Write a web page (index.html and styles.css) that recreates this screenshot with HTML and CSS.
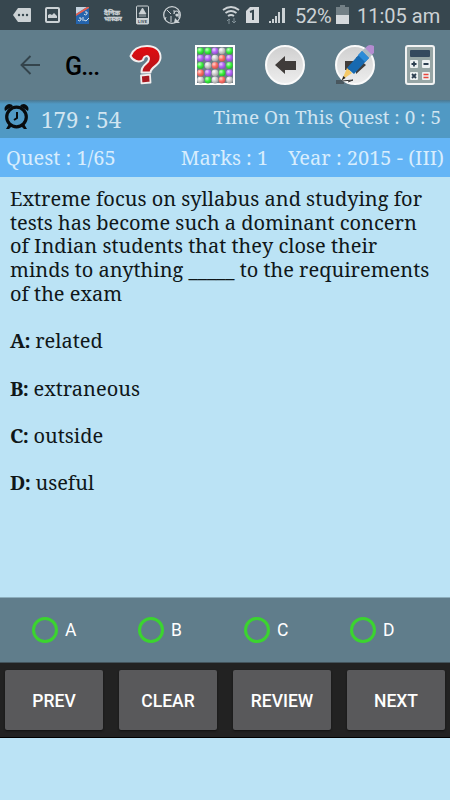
FILE: index.html
```
<!DOCTYPE html>
<html lang="en">
<head>
    <meta charset="UTF-8">
    <meta name="viewport" content="width=device-width, initial-scale=1.0">
    <title>GATE Quiz</title>
    <link rel="stylesheet" href="styles.css">
</head>
<body>
    <div class="status-bar">
        <svg class="status-left" width="190" height="30" viewBox="0 0 190 30">
            <path d="M13 15l5-7h12q1 0 1 1v12q0 1-1 1H18z" fill="#ccd2d5"/>
            <g fill="#37474f"><circle cx="19" cy="15" r="1.2"/><circle cx="23" cy="15" r="1.2"/><circle cx="27" cy="15" r="1.2"/></g>
            <rect x="46" y="8" width="13" height="14" rx="1" fill="none" stroke="#ccd2d5" stroke-width="2"/>
            <path d="M48 18v-3l2-1 2 1 2-2 3 3v2z" fill="#ccd2d5"/>
            <rect x="76" y="7" width="13" height="17" fill="#2464ad"/>
            <path d="M76 7h11L76 14z" fill="#c5d3df"/>
            <path d="M76 14L87 7h2v1L76 16z" fill="#e85d4b"/>
            <path d="M85 12q3-1 2 2-2 2-3 0M79 18q3-1 2 2-2 2-3 0M83 17v4M84 20l2 1 3-3" stroke="#d4dfe8" fill="none"/>
            <text class="hindi" x="104" y="14.500" textLength="16" lengthAdjust="spacingAndGlyphs">दैनिक</text>
            <text class="hindi" x="104" y="21" textLength="18" lengthAdjust="spacingAndGlyphs">भास्कर</text>
            <rect x="136.500" y="6" width="12" height="18" rx="1" fill="#37474f" stroke="#ccd2d5"/>
            <path d="M142.500 8l3.500 6h-7zM139 16h7" fill="#ccd2d5" stroke="#ccd2d5" stroke-width=".8"/>
            <rect x="136.500" y="18" width="12" height="6" fill="#ccd2d5"/>
            <text class="live" x="138" y="23" textLength="9">LIVE</text>
            <g fill="none" stroke="#ccd2d5">
                <circle cx="172" cy="15" r="8.300" stroke-width="1.300"/>
                <path d="M167 10l4 4M171 16v6M166 17l-1 3M173 11h2"/>
                <path d="M174 14c0-4 5-4 5 0v4" stroke-width="1.200"/>
            </g>
            <path d="M175 15q2-3 4 0l-2 2zM175 18l5 5h-6z" fill="#ccd2d5"/>
        </svg>
        <svg class="status-right" width="72" height="30" viewBox="220 0 72 30">
            <g fill="none" stroke="#ccd2d5" stroke-width="1.900">
                <path d="M223 10q8-6 16 0M225.500 13q5.500-4 11 0M228 16q3-2 6 0"/>
            </g>
            <path d="M229 24v-5m-2 2l2-2 1 1M234 18v5m-2-2l2 2 2-2" stroke="#819097" fill="none"/>
            <path d="M250 7h9v16h-13V11z" fill="#d5d9dc"/>
            <path d="M250 12l3-1v9" stroke="#37474f" stroke-width="2" fill="none"/>
            <path d="M269 23v-2h2v2zM272 23v-4h2v4zM275 23v-7h2v7zM278 23V12h2v11zM282 23V8h3v15z" fill="#ccd2d5"/>
        </svg>
        <span class="battery-text">52%</span>
        <svg class="battery" width="13" height="20" viewBox="0 0 13 20">
            <path d="M4 0h5v2h4v8H0V2h4z" fill="#738086"/>
            <path d="M0 10h13v9H0z" fill="#d5d9dc"/>
        </svg>
        <span class="clock">11:05 am</span>
    </div>

    <div class="toolbar">
        <svg class="back" width="20" height="20" viewBox="0 0 20 20">
            <path d="M20 10H2M10.500 1L1.500 10l9 9" fill="none" stroke="#34444c" stroke-width="1.900"/>
        </svg>
        <div class="title">G...</div>
        <div class="tools">
            <svg width="40" height="42" viewBox="0 0 40 42">
                <defs>
                    <linearGradient id="red" x1="0" y1="0" x2="0" y2="1"><stop stop-color="#e20b0e"/><stop offset="1" stop-color="#b5151c"/></linearGradient>
                    <linearGradient id="silver" x1="0" y1="0" x2="0" y2="1"><stop stop-color="#cfcfcf"/><stop offset="1" stop-color="#eee"/></linearGradient>
                    <radialGradient id="g" cx=".35" cy=".3" r=".8"><stop stop-color="#c4ffc0"/><stop offset=".5" stop-color="#38ee3c"/><stop offset="1" stop-color="#22a928"/></radialGradient>
                    <radialGradient id="p" cx=".35" cy=".3" r=".8"><stop stop-color="#ead5ff"/><stop offset=".5" stop-color="#b463f5"/><stop offset="1" stop-color="#8150b5"/></radialGradient>
                    <radialGradient id="w" cx=".35" cy=".3" r=".8"><stop stop-color="#fff"/><stop offset=".5" stop-color="#cbcbcb"/><stop offset="1" stop-color="#929292"/></radialGradient>
                    <radialGradient id="r" cx=".35" cy=".3" r=".8"><stop stop-color="#ffd5d0"/><stop offset=".5" stop-color="#fa6d65"/><stop offset="1" stop-color="#c34f49"/></radialGradient>
                </defs>
                <path d="M5.500 12C8 5 14 2 22 2c9 0 14 5 13.500 12C35 22 26 22 25.500 28.500h-9C16 20 24 20 24 15c0-4-5-4-6 1-4 3-10 1-12.500-4z" fill="url(#red)" stroke="#f2eeee" stroke-width="2" stroke-linejoin="round"/>
                <path d="M16 31.500l9-.8.500 7.800-9 .8z" fill="#a81820" stroke="#f2eeee" stroke-width="1.800" stroke-linejoin="round"/>
            </svg>
            <svg width="40" height="40" viewBox="0 0 40 40">
                <rect x="1" y="1" width="38" height="38" fill="#6c7d87" stroke="#fff" stroke-width="2"/>
                <g fill="url(#g)"><circle cx="5.500" cy="6" r="3.400"/><circle cx="13" cy="6" r="3.400"/><circle cx="34.500" cy="6" r="3.400"/><circle cx="5.500" cy="20.500" r="3.400"/><circle cx="34.500" cy="20.500" r="3.400"/><circle cx="27" cy="28" r="3.400"/><circle cx="13" cy="35" r="3.400"/></g>
                <g fill="url(#p)"><circle cx="20" cy="6" r="3.400"/><circle cx="5.500" cy="13.200" r="3.400"/><circle cx="13" cy="13.200" r="3.400"/><circle cx="34.500" cy="13.200" r="3.400"/><circle cx="27" cy="20.500" r="3.400"/><circle cx="13" cy="28" r="3.400"/><circle cx="34.500" cy="28" r="3.400"/></g>
                <g fill="url(#w)"><circle cx="27" cy="6" r="3.400"/><circle cx="20" cy="13.200" r="3.400"/><circle cx="13" cy="20.500" r="3.400"/><circle cx="20" cy="28" r="3.400"/><circle cx="5.500" cy="35" r="3.400"/><circle cx="20" cy="35" r="3.400"/><circle cx="34.500" cy="35" r="3.400"/></g>
                <g fill="url(#r)"><circle cx="27" cy="13.200" r="3.400"/><circle cx="20" cy="20.500" r="3.400"/><circle cx="5.500" cy="28" r="3.400"/><circle cx="27" cy="35" r="3.400"/></g>
            </svg>
            <svg width="40" height="40" viewBox="0 0 40 40">
                <circle cx="20" cy="20" r="19" fill="url(#silver)" stroke="#fafafa" stroke-width="2"/>
                <path d="M10 20l10-9v5h11v9H20v4z" fill="#403c3a"/>
            </svg>
            <svg width="40" height="40" viewBox="0 0 40 40">
                <circle cx="20" cy="20" r="19" fill="url(#silver)" stroke="#fafafa" stroke-width="2"/>
                <path d="M10 16h11v-4l10 8-10 9v-4H10z" fill="#403c3a"/>
                <path d="M30 4q3-6 9-3v7l-4 3z" fill="#b48cd0"/>
                <path d="M30 3l7 7-3 3-7-7z" fill="#aebac2"/>
                <path d="M27 6l7 7-15 16-7-6z" fill="#1769b0"/>
                <path d="M27 6l7 7-4 4-7-7z" fill="#2c8bd8"/>
                <path d="M12 23l5 5-10 7z" fill="#f5c968"/>
                <path d="M8.500 31l2 2-4 2.500z" fill="#222"/>
                <path d="M1 36h6l11-1-5 2M1 38h8" stroke="#333" fill="none"/>
            </svg>
            <svg width="30" height="40" viewBox="0 0 30 40">
                <rect x="1" y="1" width="28" height="38" rx="2" fill="#96a5a5" stroke="#f2f3f3" stroke-width="2"/>
                <rect x="5" y="5" width="20" height="7" rx="1" fill="#34495e"/>
                <g fill="#ecf0f1"><rect x="5" y="15" width="8" height="8" rx="1"/><rect x="17" y="15" width="8" height="8" rx="1"/><rect x="5" y="27" width="8" height="8" rx="1"/><rect x="17" y="27" width="8" height="8" rx="1"/></g>
                <path d="M9 16.500v5M6.500 19h5M18.500 19h5M7 29l4 4m0-4l-4 4" stroke="#2c3e50" stroke-width="1.800"/>
                <path d="M18.500 29.500h5M18.500 32.500h5" stroke="#e9453c" stroke-width="1.700"/>
            </svg>
        </div>
    </div>

    <div class="timer-bar">
        <svg class="alarm" width="25" height="26" viewBox="0 0 25 26">
            <path d="M1 7Q-1 2 5 0q3 0 4 2zM24 7q2-5-4-7-3 0-4 2z" fill="#080b0d"/>
            <circle cx="12.500" cy="13" r="9.800" fill="none" stroke="#080b0d" stroke-width="3.200"/>
            <path d="M13 8v6l-3 2" fill="none" stroke="#080b0d" stroke-width="2"/>
            <path d="M5 20l-3 5h3l3-3M20 20l3 5h-3l-3-3" fill="#080b0d"/>
        </svg>
        <span class="timer">179 : 54</span>
        <span class="quest-time">Time On This Quest : 0 : 5</span>
    </div>

    <div class="info-bar">
        <span class="quest">Quest : 1/65</span>
        <span class="marks">Marks : 1</span>
        <span class="year">Year : 2015 - (III)</span>
    </div>

    <div class="question">
        <p>Extreme focus on syllabus and studying for<br>
        tests has become such a dominant concern<br>
        of Indian students that they close their<br>
        minds to anything _____ to the requirements<br>
        of the exam</p>
        <p><b>A:</b> related</p>
        <p><b>B:</b> extraneous</p>
        <p><b>C:</b> outside</p>
        <p><b>D:</b> useful</p>
    </div>

    <div class="answers">
        <label><span class="radio"></span>A</label>
        <label><span class="radio"></span>B</label>
        <label><span class="radio"></span>C</label>
        <label><span class="radio"></span>D</label>
    </div>

    <div class="buttons">
        <button>PREV</button>
        <button>CLEAR</button>
        <button>REVIEW</button>
        <button>NEXT</button>
    </div>
</body>
</html>
```
FILE: styles.css
```
* {
    box-sizing: border-box;
}

body {
    margin: 0;
    height: 800px;
    overflow: hidden;
    display: flex;
    flex-direction: column;
    background: #bbe3f5;
    font-family: Roboto, sans-serif;
}

svg {
    display: block;
    flex-shrink: 0;
}

.status-bar {
    height: 30px;
    display: flex;
    align-items: center;
    background: #37474f;
    color: #ccd2d5;
    font-size: 20px;
    white-space: nowrap;
}

.status-right {
    margin-left: 30px;
}

.battery-text {
    width: 37px;
    margin-left: 3px;
    padding-top: 2px;
    letter-spacing: -0.2px;
}

.battery {
    margin-left: 4px;
}

.clock {
    margin-left: 8px;
    padding-top: 2px;
}

.hindi {
    font: bold 6px "Noto Sans", sans-serif;
    fill: #ccd2d5;
    stroke: #ccd2d5;
    stroke-width: 0.3px;
}

.live {
    font: bold 4px Roboto, sans-serif;
    fill: #37474f;
}

.toolbar {
    height: 70px;
    display: flex;
    align-items: center;
    padding: 0 15px 0 20px;
    background: #607d8b;
}

.title {
    width: 60px;
    padding: 3px 0 0 25px;
    font-size: 25px;
    font-weight: 500;
    letter-spacing: -0.9px;
    white-space: nowrap;
}

.tools {
    flex: 1;
    display: flex;
    align-items: center;
    justify-content: space-between;
    margin-left: 25px;
}

.timer-bar,
.info-bar,
.question {
    font-family: "Noto Serif", "DejaVu Serif Condensed", "DejaVu Serif", serif;
    white-space: nowrap;
}

.timer-bar {
    height: 38px;
    display: flex;
    padding: 4px 9px 0 4px;
    background: linear-gradient(#4c7890, #5099c4 4px);
    color: #d1e5f1;
}

.timer {
    margin: 1px 0 0 12px;
    font-size: 22.3px;
    line-height: 30px;
}

.quest-time {
    margin-left: auto;
    font-size: 18.9px;
    line-height: 26px;
}

.info-bar {
    height: 39px;
    display: flex;
    padding: 0 6px;
    background: #64b5f6;
    color: #d8edfd;
    font-size: 20px;
    line-height: 40px;
}

.marks {
    margin-left: auto;
}

.year {
    margin-left: 20px;
}

.question {
    flex: 1;
    padding: 10px;
    color: #101719;
    font-size: 20px;
    line-height: 23.7px;
}

.question p {
    margin: 0 0 23.7px;
}

.question b {
    letter-spacing: -0.6px;
}

.answers {
    height: 65px;
    display: flex;
    padding-left: 32px;
    background: #607d8b;
    border-top: 1px solid #8caebd;
    color: #fff;
    font-size: 17.5px;
}

.answers label {
    width: 106px;
    flex-shrink: 0;
    display: flex;
    align-items: center;
    gap: 7px;
}

.radio {
    width: 26px;
    height: 26px;
    border: 3px solid #3bd42f;
    border-radius: 50%;
}

.buttons {
    height: 76px;
    display: flex;
    justify-content: space-between;
    padding: 7px 5px 8px;
    background: #222;
    border-top: 1px solid #43535b;
    border-bottom: 1px solid #000;
    margin-bottom: 62px;
}

.buttons button {
    width: 98px;
    height: 60px;
    padding: 2px 0 0;
    border: 0;
    border-radius: 2px;
    background: #59595b;
    color: #fff;
    box-shadow: 0 1px 2px #111;
    font: 500 17.5px Roboto, sans-serif;
}
```
